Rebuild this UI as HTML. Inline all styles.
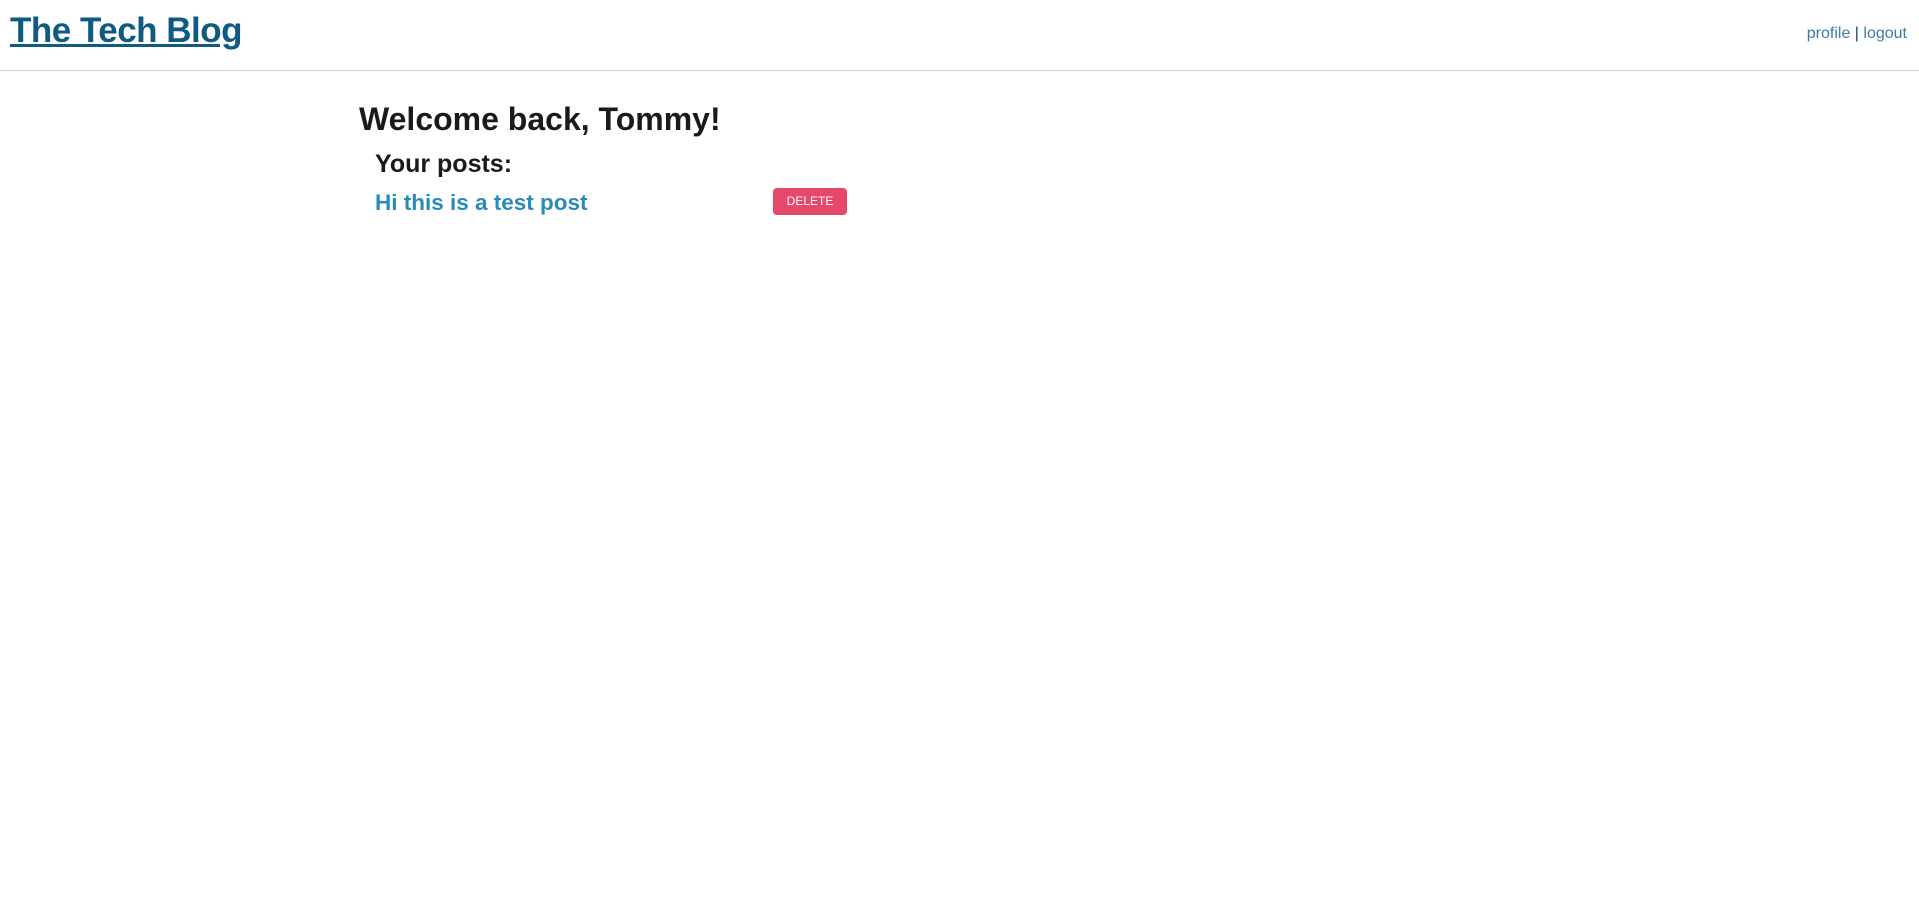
<!DOCTYPE html>
<html><head><meta charset="utf-8"><style>
body{margin:0;background:#fff;font-family:"Liberation Sans",sans-serif;color:#1a1a1a;}
.hdr{position:relative;height:70px;border-bottom:1px solid #cfcfcf;}
.title{position:absolute;left:10px;top:11px;font-size:35px;font-weight:bold;color:#0f5a80;text-decoration:underline;letter-spacing:-0.5px;}
.nav{position:absolute;right:12px;top:25px;font-size:16px;color:#1a3a6a;}
.nav a{color:#3a7ca5;text-decoration:none;}
h1{position:absolute;left:359px;top:101px;margin:0;font-size:32px;font-weight:bold;}
h2{position:absolute;left:375px;top:150px;margin:0;font-size:25px;font-weight:bold;}
.post{position:absolute;left:375px;top:190px;font-size:22.5px;font-weight:bold;color:#2a8bbb;}
.btn{position:absolute;left:773px;top:188px;width:74px;height:27px;background:#e5486a;border-radius:4px;color:#fff;font-size:12px;line-height:27px;text-align:center;}
</style></head><body>
<div class="hdr"><div class="title">The Tech Blog</div>
<div class="nav"><a>profile</a> | <a>logout</a></div></div>
<h1>Welcome back, Tommy!</h1>
<h2>Your posts:</h2>
<div class="post">Hi this is a test post</div>
<div class="btn">DELETE</div>
</body></html>
